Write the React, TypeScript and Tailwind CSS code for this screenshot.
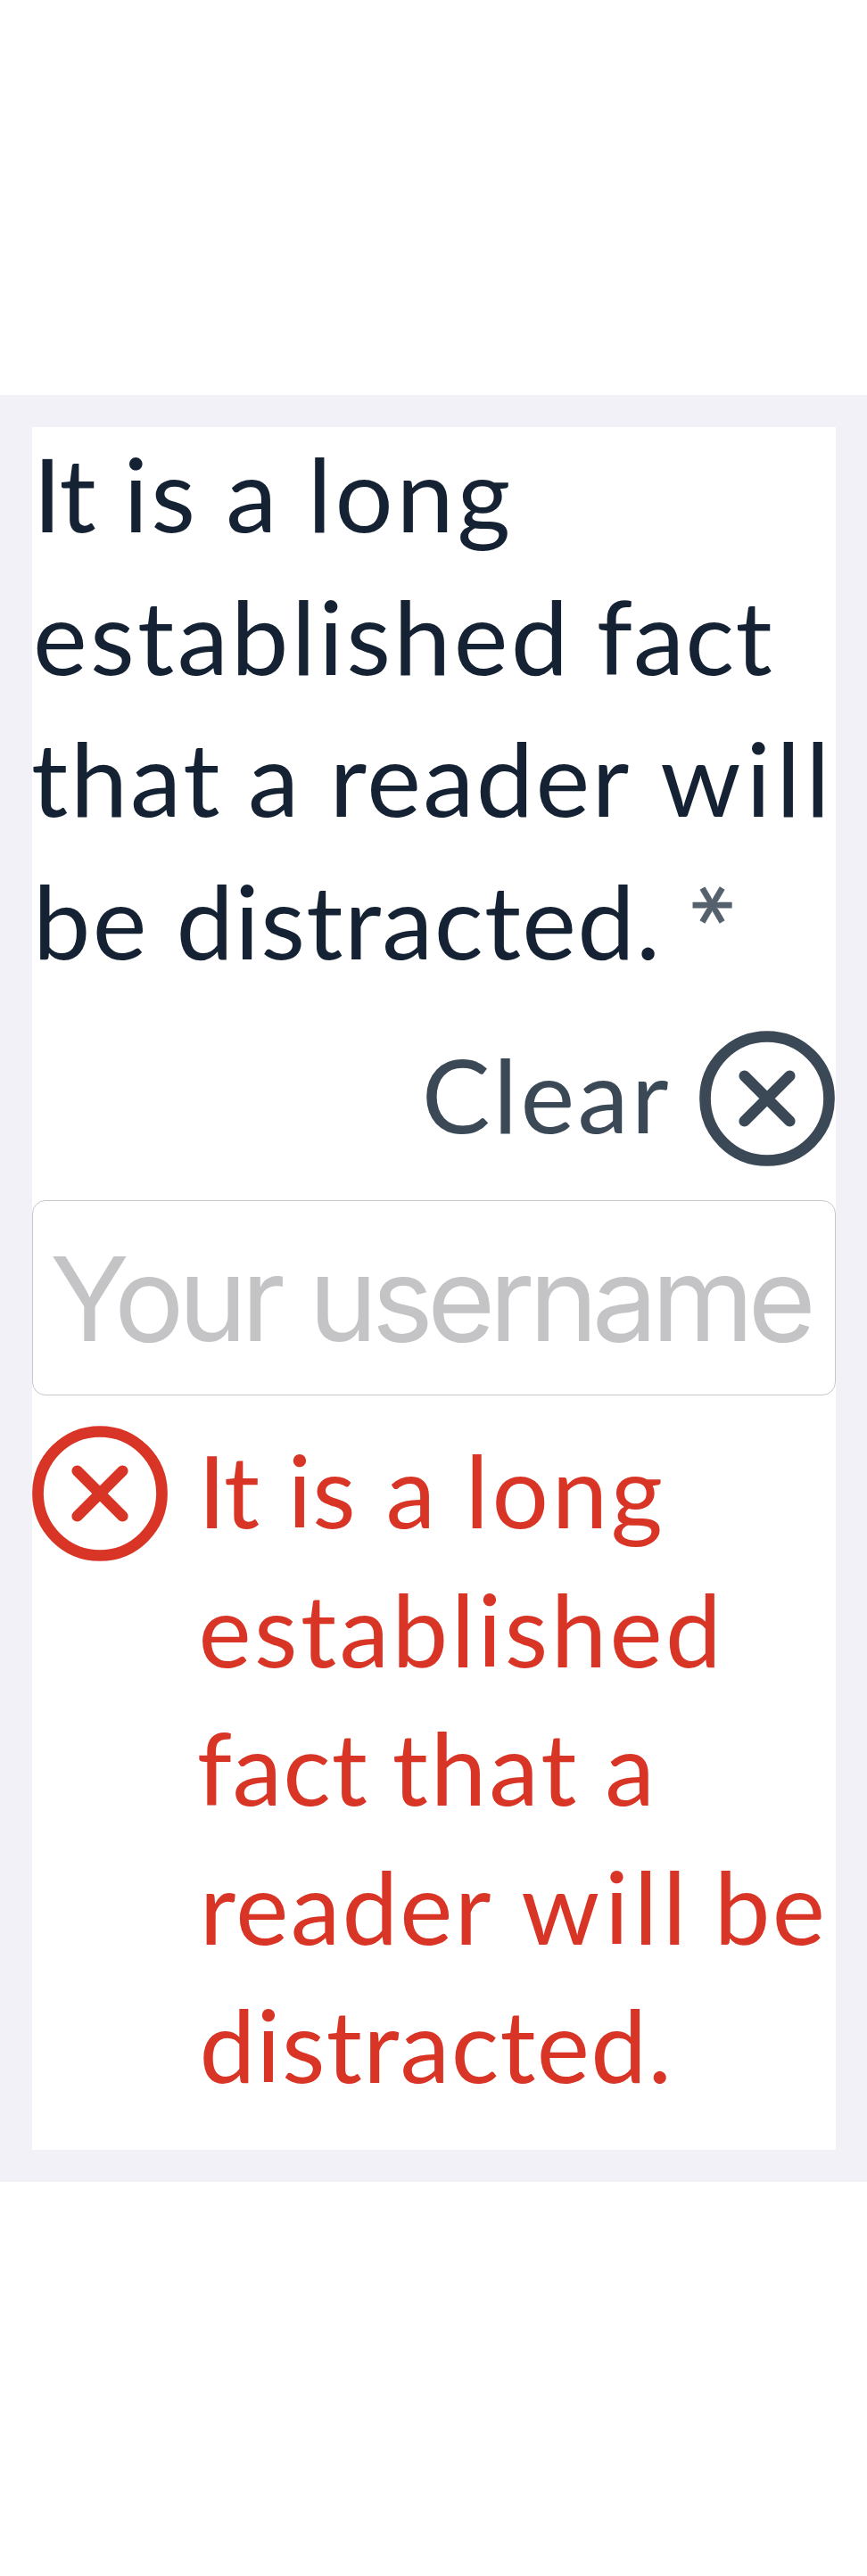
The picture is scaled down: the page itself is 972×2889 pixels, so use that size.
function CircleX() {
  return (
    <svg viewBox="0 0 152 152" fill="none" stroke="currentColor" className="h-[152px] w-[152px] shrink-0" aria-hidden="true">
      <circle cx="76" cy="76" r="69.5" strokeWidth="12.7" />
      <path d="M50.6 50.6 101.4 101.4M101.4 50.6 50.6 101.4" strokeWidth="12.4" strokeLinecap="round" />
    </svg>
  );
}

export default function App() {
  return (
    <main className="min-h-[2889px] w-[972px] bg-white pt-[443px] font-['Lato',sans-serif]">
      <section className="h-[2004px] bg-[#f2f1f7] pt-9 pr-[35px] pl-9">
        <div className="flow-root h-[1932px] w-[901px] bg-white">
          <label htmlFor="username" className="-mt-[6px] block h-[683px] text-[115px] leading-[159.6px] whitespace-nowrap text-[#152233]">
            <span className="block">
              <span className="ml-[1px] tracking-[-1px]">It</span>{" "}
              <span className="ml-[2.2px] tracking-[3.35px]">is</span>{" "}
              <span className="ml-[1.3px]">a</span>{" "}
              <span className="ml-[4.8px] tracking-[3.8px]">long</span>
            </span>
            <span className="block">
              <span className="ml-[1px] tracking-[3.3px]">established</span>{" "}
              <span className="-ml-[1.1px] tracking-[1.19px]">fact</span>
            </span>
            <span className="block">
              <span className="-ml-[1.1px] tracking-[2.87px]">that</span>{" "}
              <span className="-ml-[0.8px]">a</span>{" "}
              <span className="ml-[4.8px] tracking-[2.32px]">reader</span>{" "}
              <span className="ml-[3px] tracking-[6px]">will</span>
            </span>
            <span className="flex items-start">
              <span>
                <span className="ml-[1px] tracking-[2.47px]">be</span>{" "}
                <span className="ml-[1px] tracking-[1.35px]">distracted.</span>
              </span>
              <span className="mt-[10px] ml-[26px] origin-[28.4px_53.2px] rotate-90 text-[133px] leading-[160px] text-[#56616e] [-webkit-text-stroke:0.9px_#56616e]">*</span>
            </span>
          </label>

          <button type="button" className="flex h-[152px] w-[900px] items-start justify-end gap-[31px] text-[#3b4856]">
            <span className="-mt-[6px] text-[115px] leading-[152px] tracking-[3.29px]">Clear</span>
            <CircleX />
          </button>

          <input
            id="username"
            type="text"
            placeholder="Your username"
            className="mt-[38px] block h-[219px] w-[901px] rounded-[15px] border border-[#c7c7c9] bg-white pt-[2px] pl-[19px] font-['Inter',sans-serif] text-[131px] tracking-[-6.8px] [word-spacing:3px] placeholder:text-[#c4c4c6] placeholder:opacity-100"
          />

          <div className="mt-[34px] flex items-start gap-[33px] text-[#d93526]">
            <CircleX />
            <p className="-mt-[6px] text-[112px] leading-[155.5px] whitespace-nowrap">
              <span className="block">
                <span className="ml-[1px] tracking-[-0.8px]">It</span>{" "}
                <span className="ml-[3.4px] tracking-[1.04px]">is</span>{" "}
                <span className="ml-[3.9px]">a</span>{" "}
                <span className="ml-[4.8px] tracking-[3.6px]">long</span>
              </span>
              <span className="ml-[1.5px] block tracking-[3.4px]">established</span>
              <span className="block">
                <span className="-ml-[0.3px] tracking-[0.96px]">fact</span>{" "}
                <span className="-ml-[1.8px] tracking-[3.02px]">that</span>{" "}
                <span className="ml-[0.2px]">a</span>
              </span>
              <span className="block">
                <span className="ml-[2.7px] tracking-[2.17px]">reader</span>{" "}
                <span className="ml-[3px] tracking-[5.8px]">will</span>{" "}
                <span className="-ml-[3.2px] tracking-[2.35px]">be</span>
              </span>
              <span className="ml-[2.5px] block tracking-[1.4px]">distracted.</span>
            </p>
          </div>
        </div>
      </section>
    </main>
  );
}
